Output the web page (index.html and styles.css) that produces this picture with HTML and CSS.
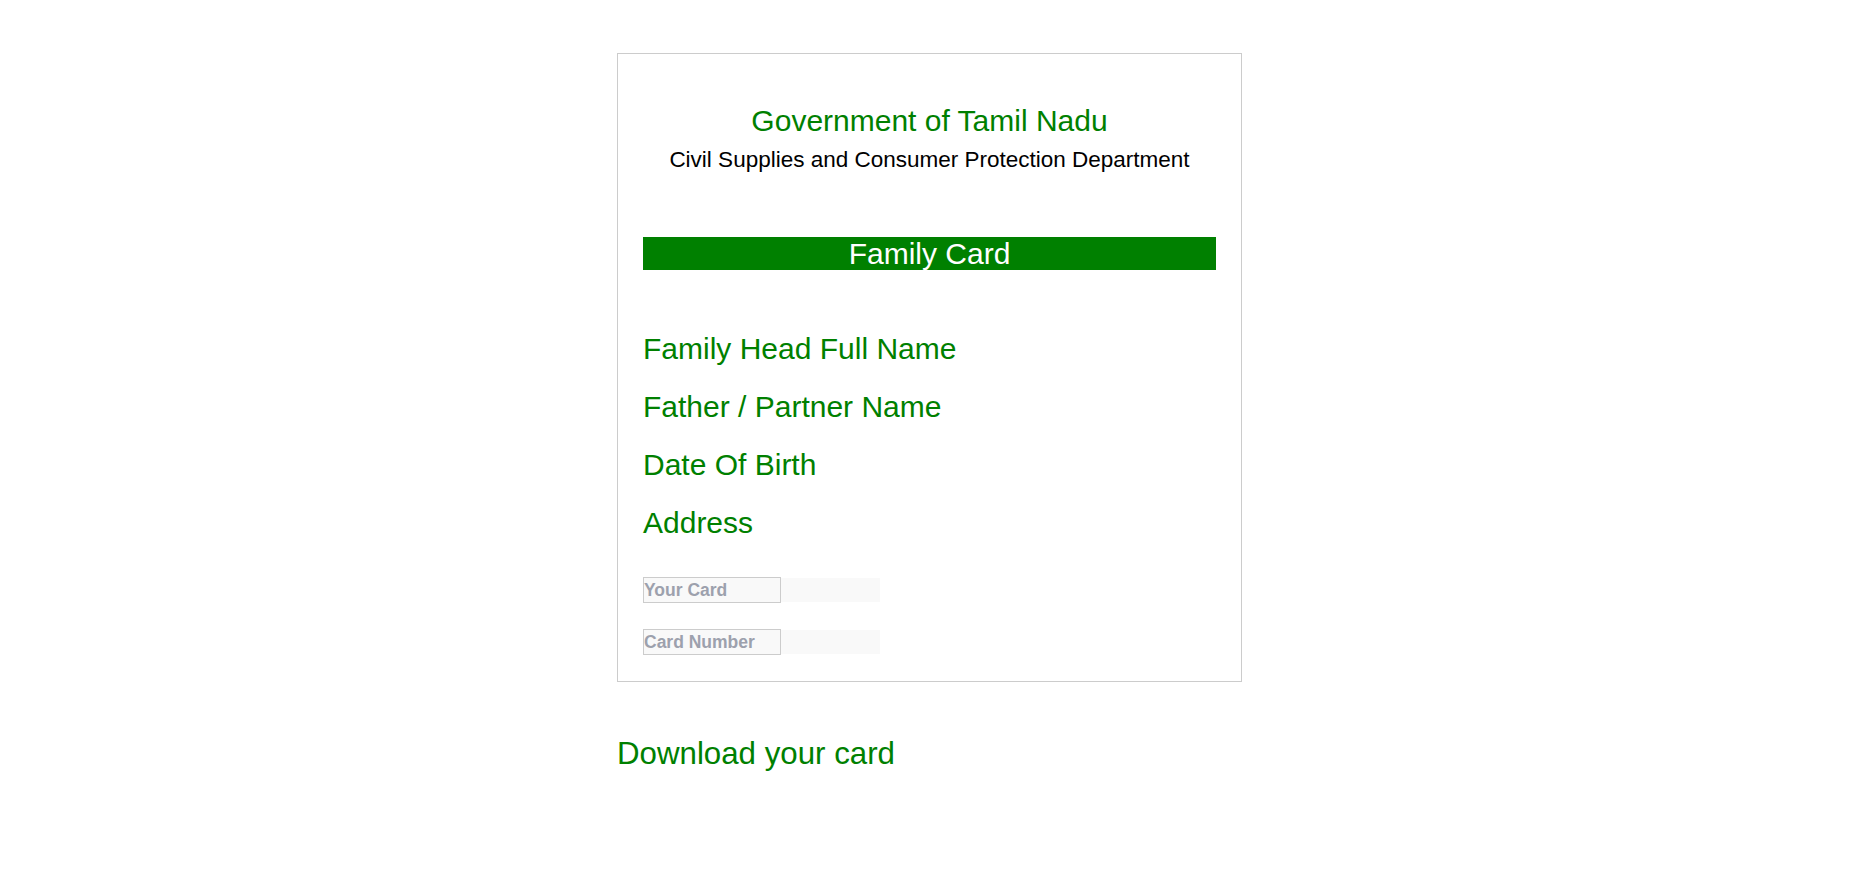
FILE: index.html
```html
<!DOCTYPE html>
<html lang="en">
<head>
<meta charset="utf-8">
<title>Family Card</title>
<link rel="stylesheet" href="styles.css">
</head>
<body>
<div class="page">
  <div class="card">
    <div class="title">Government of Tamil Nadu</div>
    <div class="subtitle">Civil Supplies and Consumer Protection Department</div>
    <div class="banner">Family Card</div>
    <div class="fields">
      <div class="label">Family Head Full Name</div>
      <div class="label">Father / Partner Name</div>
      <div class="label">Date Of Birth</div>
      <div class="label">Address</div>
    </div>
    <div class="inputs">
      <div class="input-row"><input class="input" type="text" placeholder="Your Card"></div>
      <div class="input-row"><input class="input" type="text" placeholder="Card Number"></div>
    </div>
  </div>
  <div class="download">Download your card</div>
</div>
</body>
</html>
```
FILE: styles.css
```css
html, body {
  margin: 0;
  padding: 0;
  background: #ffffff;
}
body {
  padding-right: 16px;
  font-family: "Liberation Sans", Arial, sans-serif;
}
.page {
  width: 625px;
  margin: 0 auto;
  padding-top: 53px;
}
.card {
  border: 1px solid #cccccc;
  padding: 25px 25px 25px;
  display: flex;
  flex-direction: column;
}
.title {
  margin-top: 25px;
  font-size: 30px;
  line-height: 34px;
  color: #008000;
  text-align: center;
}
.subtitle {
  margin-top: 9px;
  font-size: 22.5px;
  line-height: 26px;
  color: #000000;
  text-align: center;
}
.banner {
  margin-top: 64px;
  height: 33px;
  background: #008000;
  color: #ffffff;
  font-size: 30px;
  line-height: 33px;
  text-align: center;
}
.fields {
  margin-top: 62px;
  display: flex;
  flex-direction: column;
  gap: 24px;
}
.label {
  font-size: 30px;
  line-height: 34px;
  color: #008000;
}
.inputs {
  margin-top: 38px;
  margin-bottom: 2px;
  display: flex;
  flex-direction: column;
  gap: 28px;
}
.input-row {
  width: 237px;
  height: 24px;
  background: #f9f9f9;
  display: flex;
  align-items: center;
}
.input {
  box-sizing: border-box;
  width: 138px;
  height: 26px;
  margin: 0;
  padding: 0;
  border: 1px solid #cccccc;
  background: #f9f9f9;
  font-family: "Liberation Sans", Arial, sans-serif;
  font-size: 17.5px;
  font-weight: bold;
  color: #9da1ad;
  outline: none;
}
.input::placeholder {
  color: #9da1ad;
  opacity: 1;
}
.download {
  margin-top: 54px;
  font-size: 31.25px;
  line-height: 36px;
  color: #008000;
}
```
